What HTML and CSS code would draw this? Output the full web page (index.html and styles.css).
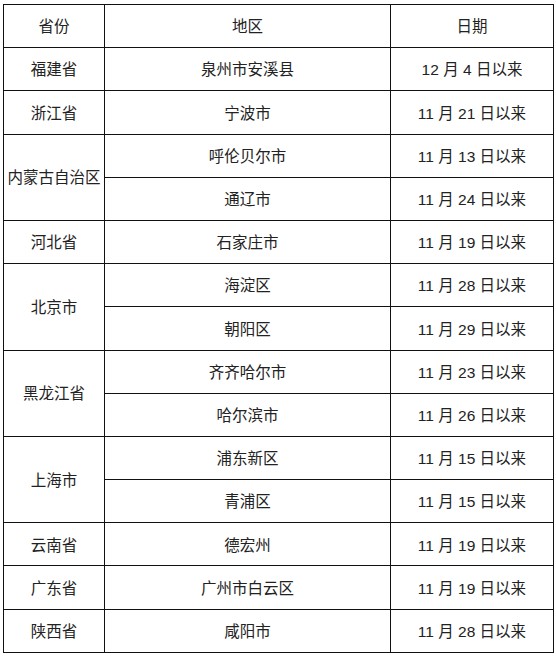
FILE: index.html
```html
<!DOCTYPE html>
<html lang="zh">
<head>
<meta charset="utf-8">
<link rel="stylesheet" href="styles.css">
</head>
<body>
<table class="tbl">
  <colgroup>
    <col class="c1"><col class="c2"><col class="c3">
  </colgroup>
  <tr><td>省份</td><td>地区</td><td>日期</td></tr>
  <tr><td>福建省</td><td>泉州市安溪县</td><td>12 月 4 日以来</td></tr>
  <tr><td>浙江省</td><td>宁波市</td><td>11 月 21 日以来</td></tr>
  <tr><td rowspan="2">内蒙古自治区</td><td>呼伦贝尔市</td><td>11 月 13 日以来</td></tr>
  <tr><td>通辽市</td><td>11 月 24 日以来</td></tr>
  <tr><td>河北省</td><td>石家庄市</td><td>11 月 19 日以来</td></tr>
  <tr><td rowspan="2">北京市</td><td>海淀区</td><td>11 月 28 日以来</td></tr>
  <tr><td>朝阳区</td><td>11 月 29 日以来</td></tr>
  <tr><td rowspan="2">黑龙江省</td><td>齐齐哈尔市</td><td>11 月 23 日以来</td></tr>
  <tr><td>哈尔滨市</td><td>11 月 26 日以来</td></tr>
  <tr><td rowspan="2">上海市</td><td>浦东新区</td><td>11 月 15 日以来</td></tr>
  <tr><td>青浦区</td><td>11 月 15 日以来</td></tr>
  <tr><td>云南省</td><td>德宏州</td><td>11 月 19 日以来</td></tr>
  <tr><td>广东省</td><td>广州市白云区</td><td>11 月 19 日以来</td></tr>
  <tr><td>陕西省</td><td>咸阳市</td><td>11 月 28 日以来</td></tr>
</table>
</body>
</html>
```
FILE: styles.css
```css
html, body {
  margin: 0;
  padding: 0;
  background: #ffffff;
}
body {
  padding: 4px 0 0 3px;
}
.tbl {
  border-collapse: collapse;
  table-layout: fixed;
  width: 550px;
  font-family: "Liberation Sans", "Noto Sans CJK SC", sans-serif;
  font-size: 15.5px;
  color: #222222;
}
.c1 { width: 101px; }
.c2 { width: 286px; }
.c3 { width: 163px; }
.tbl td {
  border: 1px solid #111111;
  height: 39.2px;
  padding: 3px 0 0 0;
  text-align: center;
  vertical-align: middle;
  white-space: nowrap;
  line-height: 1.2;
}
```
